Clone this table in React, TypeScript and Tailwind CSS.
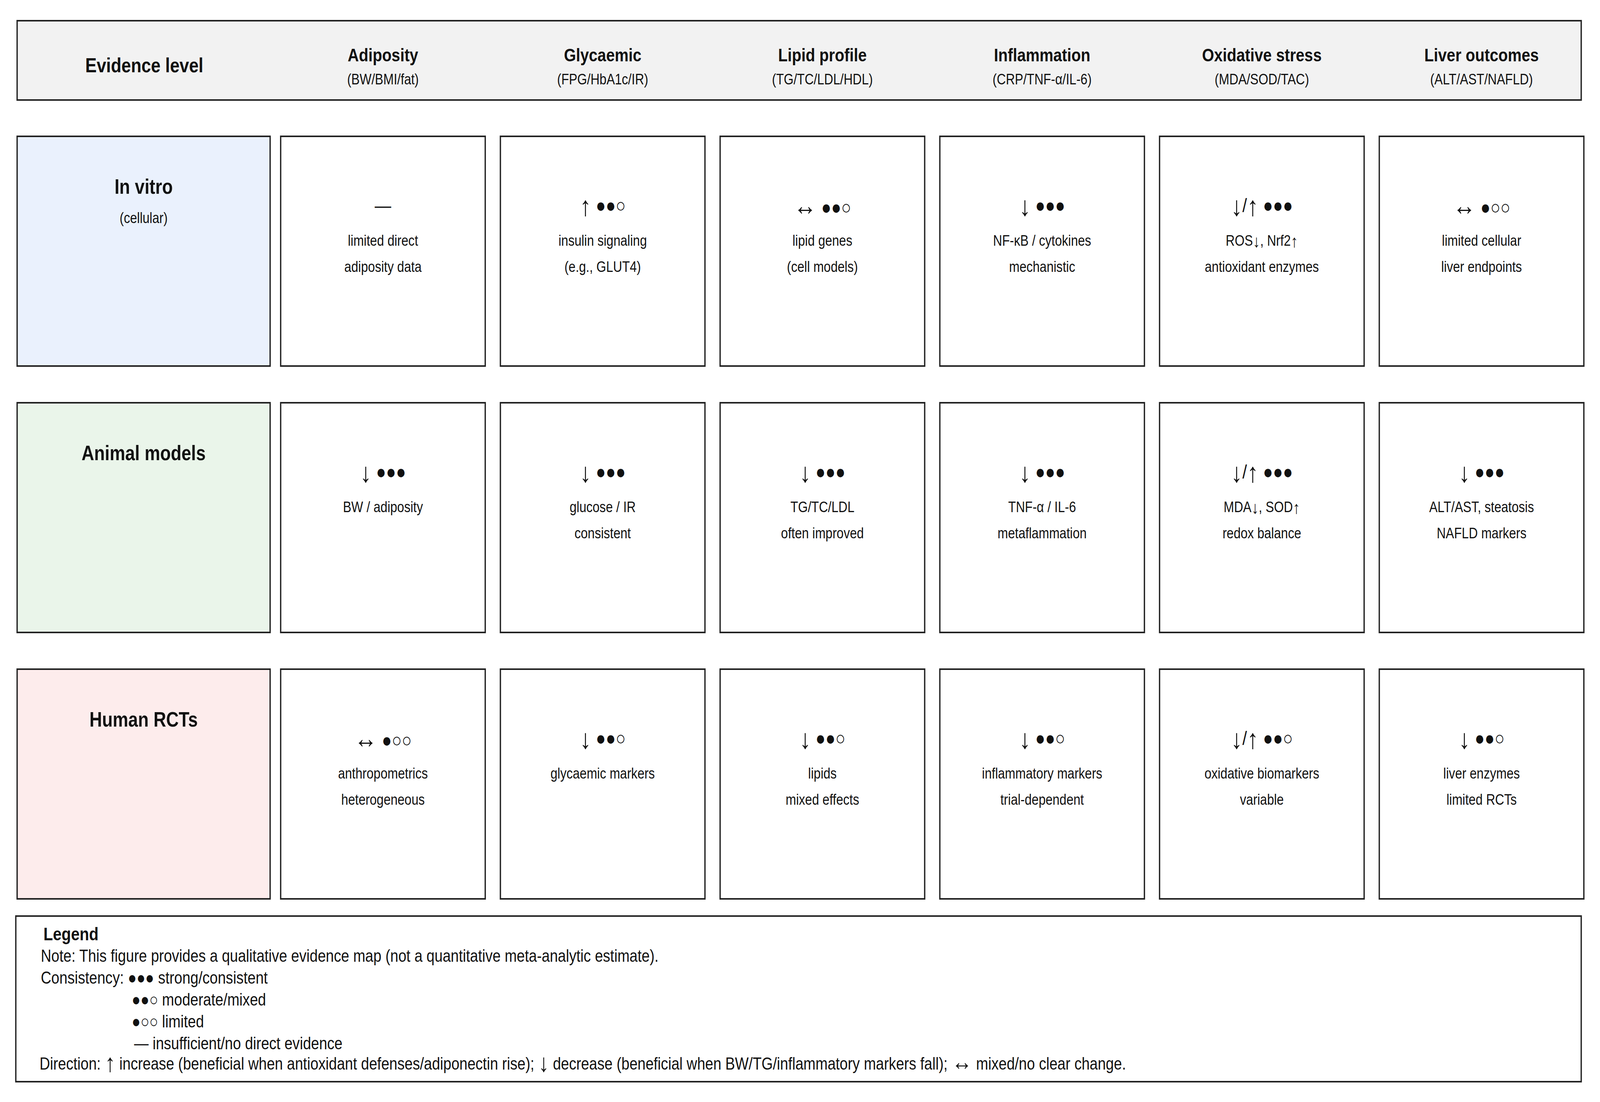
import React from "react";

type Cell = { sym: string; lines: string[] };

const columns = [
  { title: "Adiposity", sub: "(BW/BMI/fat)" },
  { title: "Glycaemic", sub: "(FPG/HbA1c/IR)" },
  { title: "Lipid profile", sub: "(TG/TC/LDL/HDL)" },
  { title: "Inflammation", sub: "(CRP/TNF-α/IL-6)" },
  { title: "Oxidative stress", sub: "(MDA/SOD/TAC)" },
  { title: "Liver outcomes", sub: "(ALT/AST/NAFLD)" },
];

const rows: { label: string; sub?: string; bg: string; cells: Cell[] }[] = [
  {
    label: "In vitro",
    sub: "(cellular)",
    bg: "bg-[#eaf1fd]",
    cells: [
      { sym: "—", lines: ["limited direct", "adiposity data"] },
      { sym: "↑ ●●○", lines: ["insulin signaling", "(e.g., GLUT4)"] },
      { sym: "↔ ●●○", lines: ["lipid genes", "(cell models)"] },
      { sym: "↓ ●●●", lines: ["NF-κB / cytokines", "mechanistic"] },
      { sym: "↓/↑ ●●●", lines: ["ROS↓, Nrf2↑", "antioxidant enzymes"] },
      { sym: "↔ ●○○", lines: ["limited cellular", "liver endpoints"] },
    ],
  },
  {
    label: "Animal models",
    bg: "bg-[#eaf5ea]",
    cells: [
      { sym: "↓ ●●●", lines: ["BW / adiposity"] },
      { sym: "↓ ●●●", lines: ["glucose / IR", "consistent"] },
      { sym: "↓ ●●●", lines: ["TG/TC/LDL", "often improved"] },
      { sym: "↓ ●●●", lines: ["TNF-α / IL-6", "metaflammation"] },
      { sym: "↓/↑ ●●●", lines: ["MDA↓, SOD↑", "redox balance"] },
      { sym: "↓ ●●●", lines: ["ALT/AST, steatosis", "NAFLD markers"] },
    ],
  },
  {
    label: "Human RCTs",
    bg: "bg-[#fdecec]",
    cells: [
      { sym: "↔ ●○○", lines: ["anthropometrics", "heterogeneous"] },
      { sym: "↓ ●●○", lines: ["glycaemic markers"] },
      { sym: "↓ ●●○", lines: ["lipids", "mixed effects"] },
      { sym: "↓ ●●○", lines: ["inflammatory markers", "trial-dependent"] },
      { sym: "↓/↑ ●●○", lines: ["oxidative biomarkers", "variable"] },
      { sym: "↓ ●●○", lines: ["liver enzymes", "limited RCTs"] },
    ],
  },
];

// Liberation's arrow glyphs are small next to Arial's, so arrows get their own size
type ArrowStyle = { vert: string; horiz: string };

const symArrows: ArrowStyle = { vert: "text-[70px] align-[-9px]", horiz: "text-[70px] align-[-2px]" };
const textArrows: ArrowStyle = { vert: "text-[44px] align-[-4px]", horiz: "text-[44px]" };
const legendArrows: ArrowStyle = { vert: "text-[64px] align-[-5px]", horiz: "text-[62px] align-[-1px]" };

function WithArrows({ text, arrows }: { text: string; arrows: ArrowStyle }) {
  const parts = text.split(/([↑↓↔])/);
  return (
    <>
      {parts.map((p, i) =>
        p === "↑" || p === "↓" ? (
          <span key={i} className={arrows.vert}>{p}</span>
        ) : p === "↔" ? (
          <span key={i} className={arrows.horiz}>{p}</span>
        ) : (
          <React.Fragment key={i}>{p}</React.Fragment>
        )
      )}
    </>
  );
}

export default function App() {
  // figure is drawn on a 4857x2821 canvas; stretch it onto the actual window
  const sx = typeof window !== "undefined" ? window.innerWidth / 4857 : 1;
  const sy = typeof window !== "undefined" ? window.innerHeight / 2821 : 1;
  return (
    <div className="h-screen w-screen overflow-hidden bg-white">
      <div
        style={{ transform: `scale(${sx}, ${sy})` }}
        className="h-[2821px] w-[4857px] origin-top-left bg-white pl-[46px] pt-[51px] font-['Liberation_Sans',Arial,sans-serif] text-[#111]"
      >
        {/* header strip */}
        <div className="ml-[4px] flex h-[207px] w-[4752px] gap-[28px] border-[4px] border-[#222] bg-[#f2f2f2]">
          <div className="w-[768px] shrink-0 pt-[86px] text-center text-[52px] font-bold leading-[52px]">
            Evidence level
          </div>
          <div className="flex shrink-0 gap-[42px]">
            {columns.map((c) => (
              <div key={c.title} className="w-[625px] shrink-0 pt-[62px] text-center">
                <div className="text-[47px] font-bold leading-[47px]">{c.title}</div>
                <div className="mt-[20px] text-[38px] leading-[38px]">{c.sub}</div>
              </div>
            ))}
          </div>
        </div>

        {/* evidence rows */}
        <div className="ml-[4px] mt-[89px] flex flex-col gap-[90px]">
          {rows.map((r) => (
            <div key={r.label} className="flex h-[592px] gap-[28px]">
              <div className={`w-[772px] shrink-0 border-[4px] border-[#222] pt-[100px] text-center ${r.bg}`}>
                <div className="text-[53px] font-bold leading-[53px]">{r.label}</div>
                {r.sub && <div className="mt-[35px] text-[38px] leading-[38px]">{r.sub}</div>}
              </div>
              <div className="flex gap-[42px]">
                {r.cells.map((c, i) => (
                  <div
                    key={i}
                    className="flex w-[625px] shrink-0 flex-col items-center border-[4px] border-[#222] bg-white pt-[150px] text-center"
                  >
                    <div className="h-[50px] whitespace-nowrap text-[50px] leading-[50px]">
                      <WithArrows text={c.sym} arrows={symArrows} />
                    </div>
                    <div className="mt-[32px] text-[38px] leading-[67px]">
                      {c.lines.map((l) => (
                        <div key={l} className="h-[67px]">
                          <WithArrows text={l} arrows={textArrows} />
                        </div>
                      ))}
                    </div>
                  </div>
                ))}
              </div>
            </div>
          ))}
        </div>

        {/* legend */}
        <div className="mt-[40px] h-[428px] w-[4756px] border-[4px] border-[#222] bg-white pt-[16px] text-[44px]">
          <div className="ml-[82px] text-[47px] font-bold leading-[56px]">Legend</div>
          <div className="ml-[74px] leading-[56px]">
            Note: This figure provides a qualitative evidence map (not a quantitative meta-analytic estimate).
          </div>
          <div className="ml-[74px] leading-[56px]">Consistency: ●●● strong/consistent</div>
          <div className="ml-[350px] leading-[56px]">●●○ moderate/mixed</div>
          <div className="ml-[350px] leading-[56px]">●○○ limited</div>
          <div className="ml-[357px] leading-[56px]">— insufficient/no direct evidence</div>
          <div className="ml-[70px] h-[38px] leading-[38px]">
            <WithArrows
              arrows={legendArrows}
              text="Direction: ↑ increase (beneficial when antioxidant defenses/adiponectin rise); ↓ decrease (beneficial when BW/TG/inflammatory markers fall); ↔ mixed/no clear change."
            />
          </div>
        </div>
      </div>
    </div>
  );
}
